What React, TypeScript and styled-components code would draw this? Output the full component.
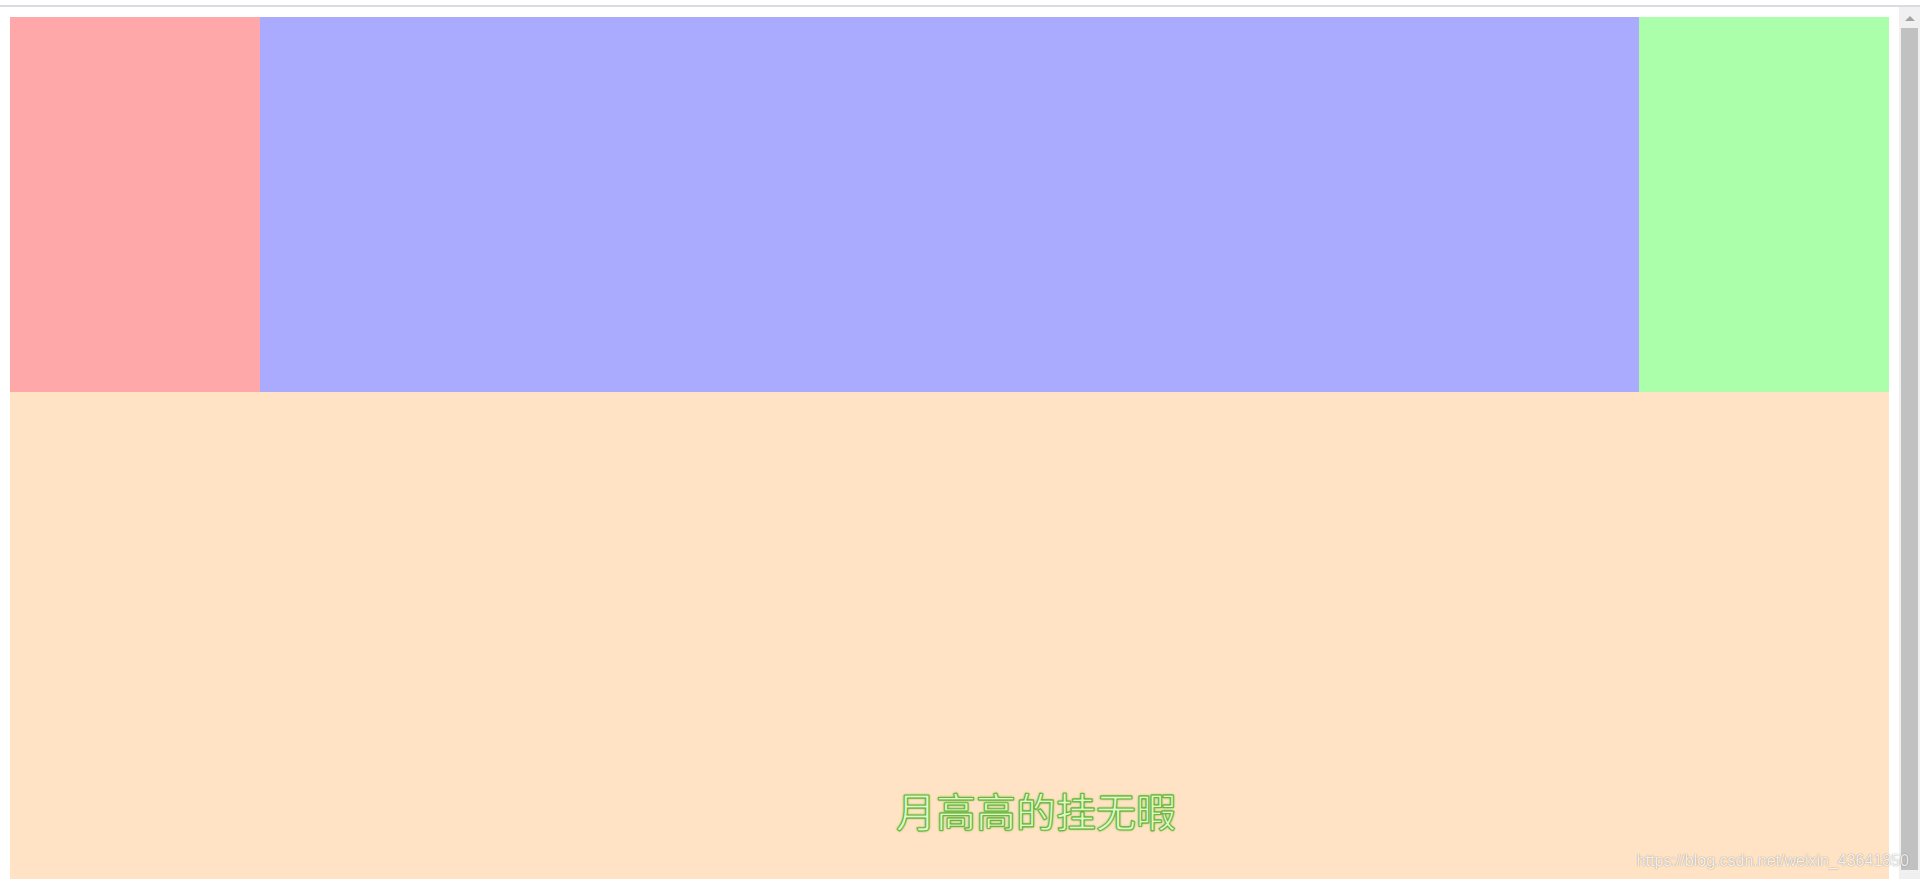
import styled, { createGlobalStyle } from "styled-components";

const Global = createGlobalStyle`
  html, body {
    margin: 0;
    padding: 0;
    background: #ffffff;
    overflow: hidden;
  }
`;

const Frame = styled.div`
  position: relative;
  width: 1920px;
  height: 879px;
  display: flex;
  flex-direction: column;
  overflow: hidden;
`;

// thin grey line across the top of the window
const TopEdge = styled.div`
  height: 5px;
  border-bottom: 2px solid #dcdae0;
  flex-shrink: 0;
`;

const Body = styled.div`
  flex: 1;
  display: flex;
  min-height: 0;
`;

const Page = styled.div`
  flex: 1;
  padding: 10px 10px 0 10px;
  display: flex;
  flex-direction: column;
`;

const Header = styled.div`
  display: grid;
  grid-template-columns: 250px 1fr 250px;
  height: 375px;
`;

const Block = styled.div<{ $bg: string }>`
  background: ${(p) => p.$bg};
`;

const Footer = styled.div`
  flex: 1;
  background: #ffe3c4;
  padding: 398px 0 0 886px;
`;

const Title = styled.div`
  font-family: "Noto Sans CJK SC", "Noto Sans", sans-serif;
  font-size: 40px;
  line-height: 40px;
  color: #dcfac8;
  -webkit-text-stroke: 0.8px #5faf2e;
  text-shadow:
    0 0 1px #4f9f20,
    0 0 2px #62b232,
    0 0 3px #8fd060;
`;

// fake scrollbar of the browser window
const Scrollbar = styled.div`
  width: 21px;
  background: #f0f0f0;
  display: flex;
  flex-direction: column;
  align-items: center;
`;

const Arrow = styled.div`
  margin-top: 9px;
  width: 0;
  height: 0;
  border-left: 5px solid transparent;
  border-right: 5px solid transparent;
  border-bottom: 5px solid #a3a3a3;
`;

const Thumb = styled.div`
  margin-top: 7px;
  width: 17px;
  height: 842px;
  background: #c1c1c1;
`;

const Watermark = styled.div`
  position: absolute;
  right: 11px;
  bottom: 9px;
  font-family: "Liberation Sans", Arial, sans-serif;
  font-size: 16px;
  color: rgba(255, 255, 255, 0.9);
  text-shadow:
    0 0 1px rgba(0, 0, 0, 0.35),
    0 0 2px rgba(0, 0, 0, 0.15);
  white-space: nowrap;
`;

const App = () => {
  return (
    <Frame>
      <Global />
      <TopEdge />
      <Body>
        <Page>
          <Header>
            <Block $bg="#ffa8aa" />
            <Block $bg="#aaabff" />
            <Block $bg="#abffab" />
          </Header>
          <Footer>
            <Title>月高高的挂无暇</Title>
          </Footer>
        </Page>
        <Scrollbar>
          <Arrow />
          <Thumb />
        </Scrollbar>
      </Body>
      <Watermark>https://blog.csdn.net/weixin_43641850</Watermark>
    </Frame>
  );
};

export default App;
